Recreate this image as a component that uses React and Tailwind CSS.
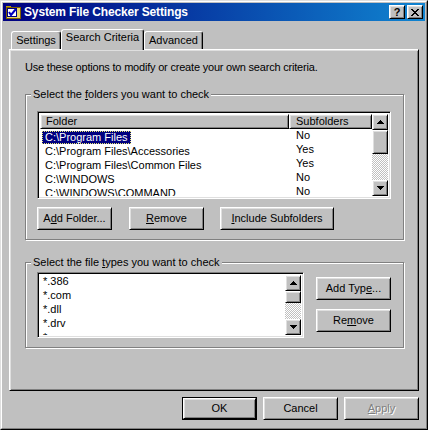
import React from "react";

const RAISED =
  "border border-t-white border-l-white border-r-black border-b-black shadow-[inset_1px_1px_0_#dfdfdf,inset_-1px_-1px_0_#808080]";
const SUNKEN =
  "border border-t-[#808080] border-l-[#808080] border-r-white border-b-white shadow-[inset_1px_1px_0_#000,inset_-1px_-1px_0_#dfdfdf]";

function Btn({ w, def, disabled, children }) {
  const inner = (
    <div
      className={`${RAISED} bg-[#c0c0c0] flex items-center justify-center w-full h-full whitespace-nowrap leading-[13px] ${
        disabled ? "text-[#808080] [text-shadow:1px_1px_0_#fff]" : "text-black"
      }`}
    >
      {children}
    </div>
  );
  if (def)
    return <div className={`border border-black h-[23px] shrink-0 ${w}`}>{inner}</div>;
  return <div className={`h-[23px] shrink-0 ${w}`}>{inner}</div>;
}

function Arrow({ dir }) {
  return (
    <div className={`${RAISED} w-[16px] h-[16px] bg-[#c0c0c0] flex items-center justify-center shrink-0`}>
      <svg width="7" height="4" viewBox="0 0 7 4" shapeRendering="crispEdges">
        {dir === "up" ? (
          <g fill="#000">
            <rect x="3" y="0" width="1" height="1" />
            <rect x="2" y="1" width="3" height="1" />
            <rect x="1" y="2" width="5" height="1" />
            <rect x="0" y="3" width="7" height="1" />
          </g>
        ) : (
          <g fill="#000">
            <rect x="0" y="0" width="7" height="1" />
            <rect x="1" y="1" width="5" height="1" />
            <rect x="2" y="2" width="3" height="1" />
            <rect x="3" y="3" width="1" height="1" />
          </g>
        )}
      </svg>
    </div>
  );
}

function ScrollBar({ thumb }) {
  return (
    <div className="w-[16px] h-full flex flex-col shrink-0">
      <Arrow dir="up" />
      <div className={`${RAISED} bg-[#c0c0c0] w-[16px] shrink-0 ${thumb}`} />
      <div className="flex-1 bg-[repeating-conic-gradient(#c0c0c0_0%_25%,#ffffff_0%_50%)] bg-[length:2px_2px]" />
      <Arrow dir="down" />
    </div>
  );
}

function Tab({ label, w, sel }) {
  return (
    <div
      className={`${w} ${
        sel ? "h-[21px] pt-[1px]" : "h-[18px] mb-[1px] pt-[2px]"
      } bg-[#c0c0c0] border-t border-l border-r border-t-white border-l-white border-r-black shadow-[inset_-1px_0_0_#808080] rounded-t-[3px] flex justify-center leading-[13px] whitespace-nowrap shrink-0`}
    >
      {label}
    </div>
  );
}

function AppIcon() {
  return (
    <svg width="16" height="16" viewBox="0 0 16 16" shapeRendering="crispEdges">
      <path d="M1 3 H6 V2 H1 Z" fill="#c0a000" />
      <rect x="1" y="3" width="14" height="11" fill="#e8d870" stroke="#806000" strokeWidth="1" />
      <rect x="2.5" y="4.5" width="9" height="8" fill="#ffffff" stroke="#000080" strokeWidth="1" />
      <path d="M4 8 L6 11 L11 5" fill="none" stroke="#0000c0" strokeWidth="2" shapeRendering="auto" />
    </svg>
  );
}

const folders = [
  ["C:\\Program Files", "No"],
  ["C:\\Program Files\\Accessories", "Yes"],
  ["C:\\Program Files\\Common Files", "Yes"],
  ["C:\\WINDOWS", "No"],
  ["C:\\WINDOWS\\COMMAND", "No"],
];

const types = ["*.386", "*.com", "*.dll", "*.drv", "*.exe"];

export default function App() {
  return (
    <div className="w-[428px] h-[430px] bg-[#c0c0c0] border border-t-[#dfdfdf] border-l-[#dfdfdf] border-r-black border-b-black font-['Liberation_Sans',Arial,sans-serif] text-[11px] text-black overflow-hidden">
      <div className="h-full border border-t-white border-l-white border-r-[#808080] border-b-[#808080] p-px flex flex-col">
        {/* Title bar */}
        <div className="h-[18px] shrink-0 flex items-center bg-[linear-gradient(to_right,#000080,#1084d0)] pl-[2px] pr-[2px]">
          <AppIcon />
          <div className="ml-[3px] text-white font-bold text-[12px] leading-[14px] whitespace-nowrap tracking-[-0.15px]">
            System File Checker Settings
          </div>
          <div className="ml-auto flex gap-[2px]">
            <div className={`${RAISED} w-[16px] h-[14px] bg-[#c0c0c0] flex items-center justify-center font-bold text-[11px] leading-[11px]`}>
              ?
            </div>
            <div className={`${RAISED} w-[16px] h-[14px] bg-[#c0c0c0] flex items-center justify-center`}>
              <svg width="8" height="7" viewBox="0 0 8 7" shapeRendering="crispEdges">
                <g fill="#000">
                  <rect x="0" y="0" width="2" height="1" />
                  <rect x="6" y="0" width="2" height="1" />
                  <rect x="1" y="1" width="2" height="1" />
                  <rect x="5" y="1" width="2" height="1" />
                  <rect x="2" y="2" width="4" height="1" />
                  <rect x="3" y="3" width="2" height="1" />
                  <rect x="2" y="4" width="4" height="1" />
                  <rect x="1" y="5" width="2" height="1" />
                  <rect x="5" y="5" width="2" height="1" />
                  <rect x="0" y="6" width="2" height="1" />
                  <rect x="6" y="6" width="2" height="1" />
                </g>
              </svg>
            </div>
          </div>
        </div>

        {/* Tabs */}
        <div className="flex items-end ml-[8px] mt-[8px] h-[21px] -mb-px relative z-10">
          <Tab label="Settings" w="w-[50px]" />
          <Tab label="Search Criteria" w="w-[83px]" sel />
          <Tab label="Advanced" w="w-[59px]" />
        </div>

        {/* Panel */}
        <div className="ml-[6px] w-[410px] h-[342px] shrink-0 border border-t-white border-l-white border-r-black border-b-black shadow-[inset_1px_1px_0_#dfdfdf,inset_-1px_-1px_0_#808080] pl-[15px] pt-[11px] flex flex-col">
          <div className="leading-[13px] whitespace-nowrap tracking-[-0.2px]">
            Use these options to modify or create your own search criteria.
          </div>

          {/* Group 1 */}
          <div className="relative mt-[20px] w-[379px] h-[146px] border border-[#808080] shadow-[1px_1px_0_#fff,inset_1px_1px_0_#fff] pl-[11px] pt-[16px] flex flex-col">
            <div className="absolute left-[5px] top-[-7px] px-[2px] bg-[#c0c0c0] leading-[13px] whitespace-nowrap">
              Select the <span className="underline">f</span>olders you want to check
            </div>
            <div className={`${SUNKEN} w-[354px] h-[88px] bg-white flex p-[2px]`}>
              <div className="flex-1 flex flex-col overflow-hidden">
                <div className="flex h-[15px] shrink-0">
                  <div className={`${RAISED} w-[249px] bg-[#c0c0c0] flex items-center pl-[5px] leading-[13px]`}>
                    Folder
                  </div>
                  <div className={`${RAISED} flex-1 bg-[#c0c0c0] flex items-center pl-[6px] leading-[13px]`}>
                    Subfolders
                  </div>
                </div>
                {folders.map(([f, s], i) => (
                  <div key={i} className="flex h-[14px] shrink-0 whitespace-nowrap">
                    <div className="w-[249px] pl-[2px]">
                      <span
                        className={`inline-block h-[13px] leading-[11px] px-[2px] border ${
                          i === 0
                            ? "bg-[#000080] text-white border-dotted border-[#e8e870]"
                            : "border-transparent"
                        }`}
                      >
                        {f}
                      </span>
                    </div>
                    <div className="pl-[7px] pt-[1px] leading-[11px]">{s}</div>
                  </div>
                ))}
              </div>
              <ScrollBar thumb="h-[24px]" />
            </div>
            <div className="flex mt-[8px]">
              <Btn w="w-[75px]">
                A<span className="underline">d</span>d Folder...
              </Btn>
              <div className="ml-[17px]">
                <Btn w="w-[75px]">
                  <span className="underline">R</span>emove
                </Btn>
              </div>
              <div className="ml-[16px]">
                <Btn w="w-[114px]">
                  <span className="underline">I</span>nclude Subfolders
                </Btn>
              </div>
            </div>
          </div>

          {/* Group 2 */}
          <div className="relative mt-[22px] w-[379px] h-[86px] border border-[#808080] shadow-[1px_1px_0_#fff,inset_1px_1px_0_#fff] pl-[11px] pt-[9px] flex">
            <div className="absolute left-[5px] top-[-7px] px-[2px] bg-[#c0c0c0] leading-[13px] whitespace-nowrap">
              Select the file <span className="underline">t</span>ypes you want to check
            </div>
            <div className={`${SUNKEN} w-[267px] h-[66px] bg-white flex p-[2px]`}>
              <div className="flex-1 flex flex-col overflow-hidden pl-[3px]">
                {types.map((t) => (
                  <div key={t} className="h-[14px] leading-[13px] shrink-0 whitespace-nowrap">
                    {t}
                  </div>
                ))}
              </div>
              <ScrollBar thumb="h-[12px]" />
            </div>
            <div className="ml-[12px] pt-[5px] flex flex-col gap-[9px]">
              <Btn w="w-[75px]">
                Add Typ<span className="underline">e</span>...
              </Btn>
              <Btn w="w-[75px]">
                Re<span className="underline">m</span>ove
              </Btn>
            </div>
          </div>
        </div>

        {/* Footer */}
        <div className="flex justify-end gap-[6px] pr-[6px] mt-[6px]">
          <Btn w="w-[75px]" def>
            OK
          </Btn>
          <Btn w="w-[75px]">Cancel</Btn>
          <Btn w="w-[75px]" disabled>
            <span className="underline">A</span>pply
          </Btn>
        </div>
      </div>
    </div>
  );
}
